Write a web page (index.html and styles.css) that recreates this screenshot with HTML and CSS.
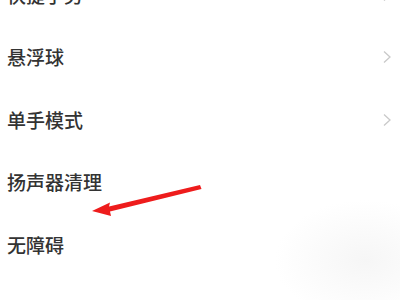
FILE: index.html
```html
<!DOCTYPE html>
<html lang="zh">
<head>
<meta charset="utf-8">
<link rel="stylesheet" href="styles.css">
</head>
<body>
<div class="screen">
  <ul class="list">
    <li class="row"><span class="label">快捷手势</span><span class="chev"><svg viewBox="0 0 10 14" width="10" height="14"><path d="M2 1.5 L8 7 L2 12.5" fill="none" stroke="#c9c9c9" stroke-width="1.3"/></svg></span></li>
    <li class="row"><span class="label">悬浮球</span><span class="chev"><svg viewBox="0 0 10 14" width="10" height="14"><path d="M2 1.5 L8 7 L2 12.5" fill="none" stroke="#c9c9c9" stroke-width="1.3"/></svg></span></li>
    <li class="row"><span class="label">单手模式</span><span class="chev"><svg viewBox="0 0 10 14" width="10" height="14"><path d="M2 1.5 L8 7 L2 12.5" fill="none" stroke="#c9c9c9" stroke-width="1.3"/></svg></span></li>
    <li class="row"><span class="label">扬声器清理</span></li>
    <li class="row"><span class="label">无障碍</span></li>
  </ul>
  <svg class="arrow" viewBox="0 0 400 300" width="400" height="300">
    <path d="M200 185 L109 206.5 L110 202.5 L92 211 L111 216 L110 211.5 L201.5 189 Z" fill="#ee1c1c"/>
  </svg>
</div>
</body>
</html>
```
FILE: styles.css
```css
html, body {
  margin: 0;
  padding: 0;
  background: #ffffff;
}
.screen {
  position: relative;
  width: 400px;
  height: 300px;
  overflow: hidden;
  background: radial-gradient(ellipse 90px 60px at 365px 260px, #f6f6f6 0%, #ffffff 100%);
  font-family: "Noto Sans CJK SC", "Noto Sans", sans-serif;
}
.list {
  list-style: none;
  margin: -37px 0 0 0;
  padding: 0;
}
.row {
  height: 62.5px;
  display: flex;
  align-items: center;
  justify-content: space-between;
  padding: 0 8px 0 7px;
}
.label {
  font-size: 19px;
  font-weight: 500;
  color: #333333;
}
.chev {
  display: flex;
  align-items: center;
  margin-top: 1px;
}
.arrow {
  position: absolute;
  left: 0;
  top: 0;
}
```
